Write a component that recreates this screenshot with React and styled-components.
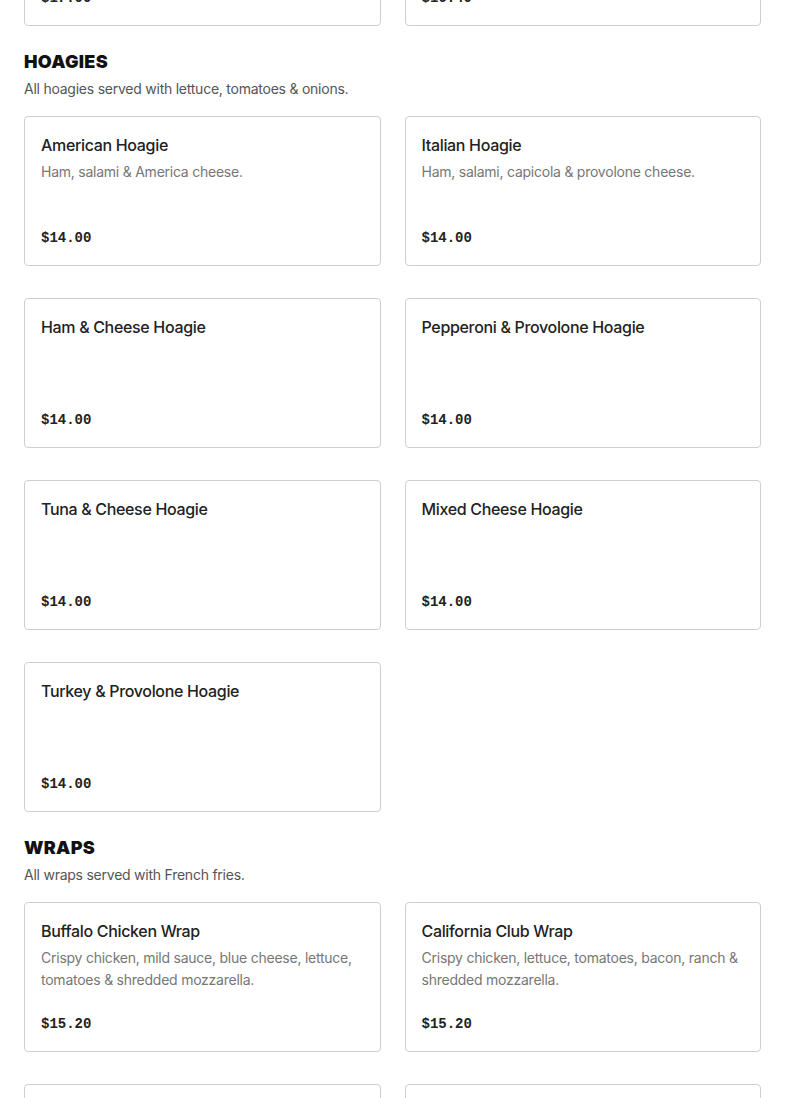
import React from 'react';
import styled, { createGlobalStyle } from 'styled-components';

const GlobalStyle = createGlobalStyle`
  body {
    margin: 0;
    background: #fff;
    font-family: Inter, "Liberation Sans", sans-serif;
    color: #222;
  }
`;

const Page = styled.div`
  padding: 0 24px;
  margin-top: -124px;
`;

const Section = styled.section`
  margin-bottom: 24px;
`;

const Heading = styled.h2`
  margin: 0;
  font-size: 18px;
  line-height: 24px;
  font-weight: 900;
  letter-spacing: 0.3px;
  color: #111;
`;

const Note = styled.p`
  margin: 5px 0 17px;
  font-size: 14px;
  line-height: 20px;
  letter-spacing: -0.24px;
  color: #555;
`;

const Grid = styled.div`
  display: grid;
  grid-template-columns: 1fr 1fr;
  column-gap: 24px;
  row-gap: 32px;
`;

const Card = styled.div`
  box-sizing: border-box;
  height: 150px;
  display: flex;
  flex-direction: column;
  padding: 16px 16px 17px;
  border: 1px solid #cfcfcf;
  border-radius: 4px;
  background: #fff;
`;

const Title = styled.div`
  font-size: 16px;
  line-height: 24px;
  font-weight: 500;
  letter-spacing: -0.33px;
  color: #222;
`;

const Desc = styled.div`
  margin-top: 4px;
  font-size: 14px;
  line-height: 22px;
  letter-spacing: -0.24px;
  color: #777;
`;

const Price = styled.div`
  margin-top: auto;
  font-family: "Liberation Mono", monospace;
  font-size: 14px;
  line-height: 20px;
  font-weight: 700;
  color: #222;
`;

const menu = [
  {
    items: [
      { name: '', price: '$17.00' },
      { name: '', price: '$16.40' },
    ],
  },
  {
    title: 'HOAGIES',
    note: 'All hoagies served with lettuce, tomatoes & onions.',
    items: [
      { name: 'American Hoagie', desc: 'Ham, salami & America cheese.', price: '$14.00' },
      { name: 'Italian Hoagie', desc: 'Ham, salami, capicola & provolone cheese.', price: '$14.00' },
      { name: 'Ham & Cheese Hoagie', price: '$14.00' },
      { name: 'Pepperoni & Provolone Hoagie', price: '$14.00' },
      { name: 'Tuna & Cheese Hoagie', price: '$14.00' },
      { name: 'Mixed Cheese Hoagie', price: '$14.00' },
      { name: 'Turkey & Provolone Hoagie', price: '$14.00' },
    ],
  },
  {
    title: 'WRAPS',
    note: 'All wraps served with French fries.',
    items: [
      {
        name: 'Buffalo Chicken Wrap',
        desc: 'Crispy chicken, mild sauce, blue cheese, lettuce, tomatoes & shredded mozzarella.',
        price: '$15.20',
      },
      {
        name: 'California Club Wrap',
        desc: 'Crispy chicken, lettuce, tomatoes, bacon, ranch & shredded mozzarella.',
        price: '$15.20',
      },
      { name: '', price: '' },
      { name: '', price: '' },
    ],
  },
];

export default function App() {
  return (
    <>
      <GlobalStyle />
      <Page>
        {menu.map((section, i) => (
          <Section key={i}>
            {section.title && <Heading>{section.title}</Heading>}
            {section.note && <Note>{section.note}</Note>}
            <Grid>
              {section.items.map((item, j) => (
                <Card key={j}>
                  {item.name && <Title>{item.name}</Title>}
                  {item.desc && <Desc>{item.desc}</Desc>}
                  <Price>{item.price}</Price>
                </Card>
              ))}
            </Grid>
          </Section>
        ))}
      </Page>
    </>
  );
}
